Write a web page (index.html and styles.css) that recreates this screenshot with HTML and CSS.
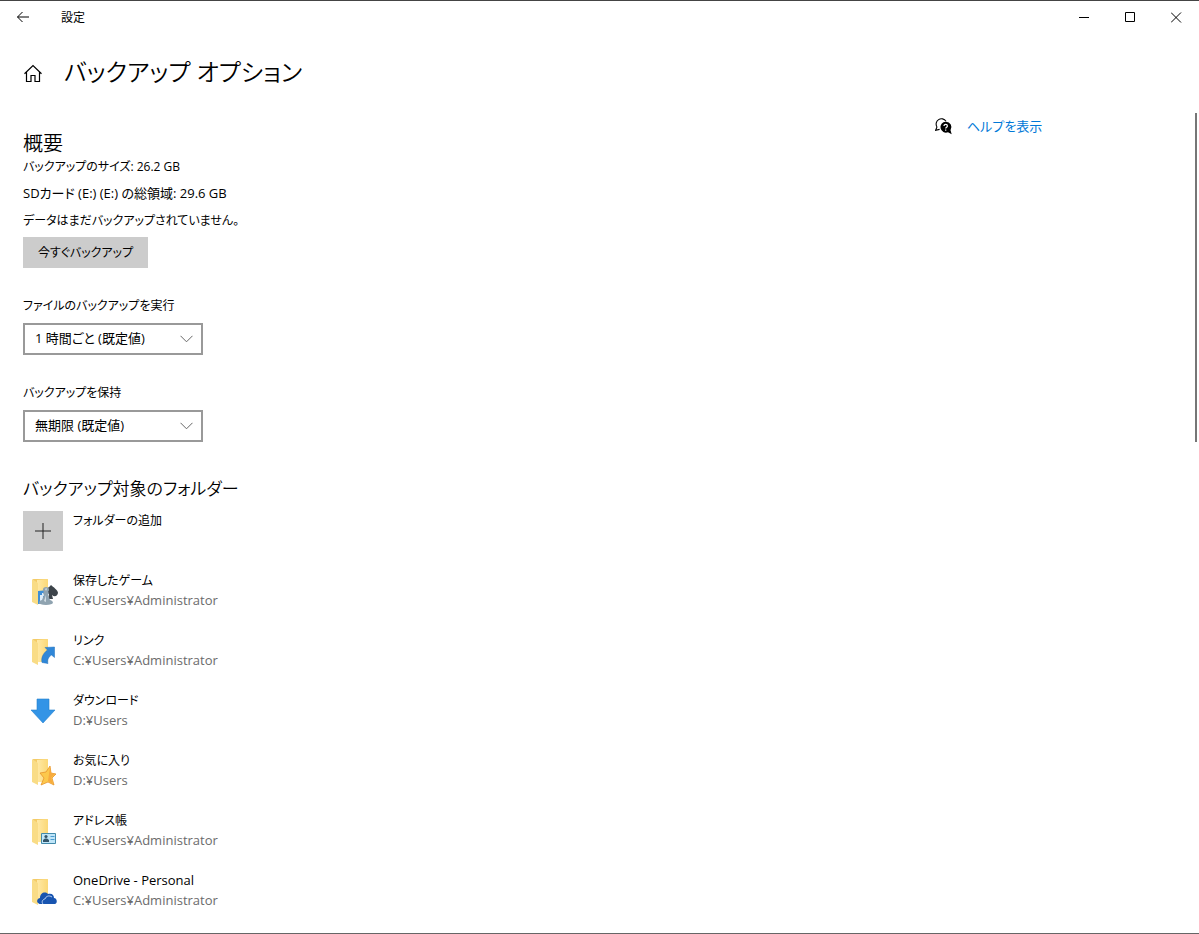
FILE: index.html
```html
<!DOCTYPE html>
<html lang="ja">
<head>
<meta charset="utf-8">
<title>設定</title>
<link rel="stylesheet" href="styles.css">
</head>
<body>
<div class="window">
  <header class="titlebar">
    <button class="back" type="button" aria-label="戻る">
      <svg width="14" height="12" viewBox="0 0 14 12"><path d="M13 6H1.5M6.5 1L1.5 6l5 5"/></svg>
    </button>
    <span class="app-name">設定</span>
    <div class="controls">
      <button type="button" aria-label="最小化"><svg width="11" height="11" viewBox="0 0 11 11"><path d="M0 5.5h10"/></svg></button>
      <button type="button" aria-label="最大化"><svg width="11" height="11" viewBox="0 0 11 11"><path d="M.5 .5h9v9h-9z"/></svg></button>
      <button type="button" aria-label="閉じる"><svg width="11" height="11" viewBox="0 0 11 11"><path d="M0 .5l10 10M10 .5l-10 10"/></svg></button>
    </div>
  </header>

  <div class="page-head">
    <button class="home" type="button" aria-label="ホーム">
      <svg width="20" height="20" viewBox="0 0 20 20"><path d="M1.5 10.700L10 2.500l8.500 8.200M3.500 9v9.500h4.500v-6h4v6h4.500V9"/></svg>
    </button>
    <h1>バックアップ オプション</h1>
  </div>

  <div class="columns">
    <main>
      <section>
        <h2 class="overview">概要</h2>
        <p>バックアップのサイズ: 26.2 GB</p>
        <p class="mixed">SDカード (E:) (E:) の総領域: 29.6 GB</p>
        <p>データはまだバックアップされていません。</p>
        <button class="action" type="button">今すぐバックアップ</button>
      </section>

      <div class="field">
        <label for="interval">ファイルのバックアップを実行</label>
        <div class="select">
          <select id="interval"><option>1 時間ごと (既定値)</option></select>
          <svg width="13" height="8" viewBox="0 0 13 8"><path d="M.5 .8l6 6 6-6"/></svg>
        </div>
      </div>
      <div class="field">
        <label for="keep">バックアップを保持</label>
        <div class="select">
          <select id="keep"><option>無期限 (既定値)</option></select>
          <svg width="13" height="8" viewBox="0 0 13 8"><path d="M.5 .8l6 6 6-6"/></svg>
        </div>
      </div>

      <section class="folders">
        <h2>バックアップ対象のフォルダー</h2>
        <div class="row">
          <button class="add" id="add" type="button" aria-labelledby="add-label"><svg width="16" height="16" viewBox="0 0 16 16"><path d="M8 0v16M0 8h16"/></svg></button>
          <label class="name" id="add-label" for="add">フォルダーの追加</label>
        </div>
        <ul>
          <li class="row">
            <svg class="icon" viewBox="0 0 40 40"><use href="#folder"/>
              <path fill="#3f8fd6" d="M15 20l10-1v13l-10 1z"/><path fill="#dcecf8" d="M17 24h2v-2h2v3h-1v5h-3z"/>
              <path fill="#3d444a" d="M28 14c2 2 7 5 7 8-1 4-4 4-6 2l1 4h-5l1-5-4-1c-1-4 4-5 6-8z"/>
              <path fill="#8fa3b0" d="M23 16c3 0 4 3 2 5l1 1-1 2 2 5c4 1 5 5-4 5s-8-4-4-5l2-5-1-2 1-1c-2-2-1-5 2-5z"/>
              <path fill="#d0dbe2" d="M22 18c1-1 2-1 2 0l-1 2zM21 30l2-6v7z"/>
            </svg>
            <div><div class="name">保存したゲーム</div><div class="path">C:¥Users¥Administrator</div></div>
          </li>
          <li class="row">
            <svg class="icon" viewBox="0 0 40 40"><use href="#folder"/>
              <path fill="#2f87d8" stroke="#1c6fbd" stroke-width=".5" d="M22 16.500l9.500-.5v10.500l-3-2.500c-3 2-4.500 5-3.500 8.500l-6-1c-1-5 1-9 5.500-12.500z"/>
            </svg>
            <div><div class="name">リンク</div><div class="path">C:¥Users¥Administrator</div></div>
          </li>
          <li class="row">
            <svg class="icon" viewBox="0 0 40 40"><path fill="#3394e6" stroke="#237fce" stroke-width=".6" d="M14 8h12v11h6L20 32 8 19h6z"/></svg>
            <div><div class="name">ダウンロード</div><div class="path">D:¥Users</div></div>
          </li>
          <li class="row">
            <svg class="icon" viewBox="0 0 40 40"><use href="#folder"/>
              <path fill="#fcc84c" stroke="#e8942a" stroke-width=".8" d="M27 15l1 7 5 1-4 4 2 7-6-3-7 3 3-7-4-5 6-1z"/><path fill="#f7ab3e" d="M27 16l1 6 4 1-4 4 2 6-5-3z"/>
            </svg>
            <div><div class="name">お気に入り</div><div class="path">D:¥Users</div></div>
          </li>
          <li class="row">
            <svg class="icon" viewBox="0 0 40 40"><use href="#folder"/>
              <path fill="#bfe5f8" stroke="#428aab" d="M18.500 22.500h14v10h-14z"/>
              <circle cx="23" cy="25.500" r="1.600" fill="#34566b"/><path fill="#34566b" d="M20 31v-2l2-1.500h2l2 1.500v2z"/>
              <path stroke="#4c9bd1" d="M27.500 25.500h4M27.500 28.500h4"/>
            </svg>
            <div><div class="name">アドレス帳</div><div class="path">C:¥Users¥Administrator</div></div>
          </li>
          <li class="row">
            <svg class="icon" viewBox="0 0 40 40"><use href="#folder"/>
              <path fill="#1754b0" d="M15 32c-2-2 0-5 2-5 0-5 5-7 8-4 4-1 6 1 6 4 3 0 4 5 1 6H18c-1 0-2 0-3-1z"/>
              <path fill="none" stroke="#dceaff" stroke-width=".8" d="M20 33c-2-2 0-5 2-5 1-3 4-4 7-2"/>
            </svg>
            <div><div class="name mixed">OneDrive - Personal</div><div class="path">C:¥Users¥Administrator</div></div>
          </li>
        </ul>
      </section>
    </main>

    <aside>
      <a class="help" href="#">
        <svg width="18" height="20" viewBox="0 -2 18 20">
          <path fill="none" stroke="#000" stroke-width="1.100" d="M2 9A5.300 5.300 0 1 1 11 3.200M2 9L.6 12.200l4-.8"/>
          <path d="M10.700 3.700a5.500 5.500 0 0 1 4.800 8.600l1.200 3.900-3.700-1.900A5.500 5.500 0 1 1 10.700 3.700z"/>
          <path fill="none" stroke="#fff" stroke-width="1.200" d="M9 8c0-2.200 3.400-2.200 3.400 0 0 1.300-1.700 1.200-1.700 2.600M10.700 11.500v1.200"/>
        </svg>
        <span>ヘルプを表示</span>
      </a>
    </aside>
    <div class="scroll-thumb"></div>
  </div>
</div>

<svg class="defs" width="0" height="0">
  <defs>
    <linearGradient id="front"><stop offset="0" stop-color="#ffe9a6"/><stop offset="1" stop-color="#fbd876"/></linearGradient>
    <g id="folder">
      <path fill="#f3cb68" d="M10 8h14v23H13z"/>
      <path fill="url(#front)" d="M14 9l11-1v23H14z"/>
      <path fill="#f9dc86" d="M9 8l6 4v22l-6-3z"/>
    </g>
  </defs>
</svg>
</body>
</html>
```
FILE: styles.css
```css
* { box-sizing: border-box; }

body {
  margin: 0;
  background: #fff;
  color: #000;
  font: 12px/20px "Open Sans", "Noto Sans CJK JP", sans-serif;
  font-feature-settings: "palt";
}

button, select {
  font: inherit;
  font-feature-settings: inherit;
  color: inherit;
  border: 0;
  border-radius: 0;
  padding: 0;
  background: none;
}

h1, h2, p, ul { margin: 0; padding: 0; }
h1, h2 { font-weight: 350; }

svg { display: block; }

.window {
  min-height: 100vh;
  border-top: 1px solid #444;
  border-bottom: 1px solid #666;
}

.titlebar { display: flex; align-items: center; height: 32px; }
.titlebar svg { fill: none; stroke: #000; margin: 0 auto; }
.back { width: 46px; height: 32px; }
.app-name { margin-left: 15px; padding-top: 2px; }
.controls { display: flex; margin-left: auto; }
.controls button { width: 46px; height: 32px; }

.page-head { display: flex; align-items: center; gap: 21px; height: 80px; padding-left: 23px; }
.home svg { fill: none; stroke: #000; stroke-width: 1.2; }
h1 { font-size: 24px; line-height: 36px; padding-bottom: 2px; }

.columns {
  position: relative;
  display: grid;
  grid-template-columns: 1fr 264px;
  padding-bottom: 22px;
}
main { padding: 21px 0 0 23px; }

h2 { font-size: 17px; line-height: 26px; }
.overview { font-size: 20px; line-height: 19px; }
p { line-height: 27px; }
.mixed, .path, .help, select { font-size: 13px; }

.action { height: 31px; margin-top: 3px; padding: 0 15px; background: #ccc; }

.field { margin-top: 28px; }
.field label { display: block; margin-bottom: 7px; }
.select { position: relative; width: 180px; }
.select select {
  display: block;
  width: 100%;
  height: 32px;
  padding: 0 28px 2px 10px;
  border: 2px solid #999;
  background: #fff;
  appearance: none;
}
.select svg {
  position: absolute;
  right: 10px;
  top: 12px;
  fill: none;
  stroke: #666;
  pointer-events: none;
}

.folders { margin-top: 34px; }
.folders h2 { margin-bottom: 9px; }
.row { display: flex; gap: 10px; height: 40px; }
ul { list-style: none; display: grid; gap: 20px; margin-top: 20px; }
.add { width: 40px; height: 40px; background: #ccc; }
.add svg { margin: 0 auto; stroke: #222; }
.icon { width: 40px; height: 40px; }
.name { line-height: 19px; }
.path { color: #6b6b6b; }

aside { padding-top: 3px; }
.help { display: flex; align-items: center; gap: 14px; color: #0078d7; text-decoration: none; }

.scroll-thumb {
  position: absolute;
  top: 0;
  right: 2px;
  width: 2px;
  height: 329px;
  background: #767676;
}

.defs { position: absolute; }
```
